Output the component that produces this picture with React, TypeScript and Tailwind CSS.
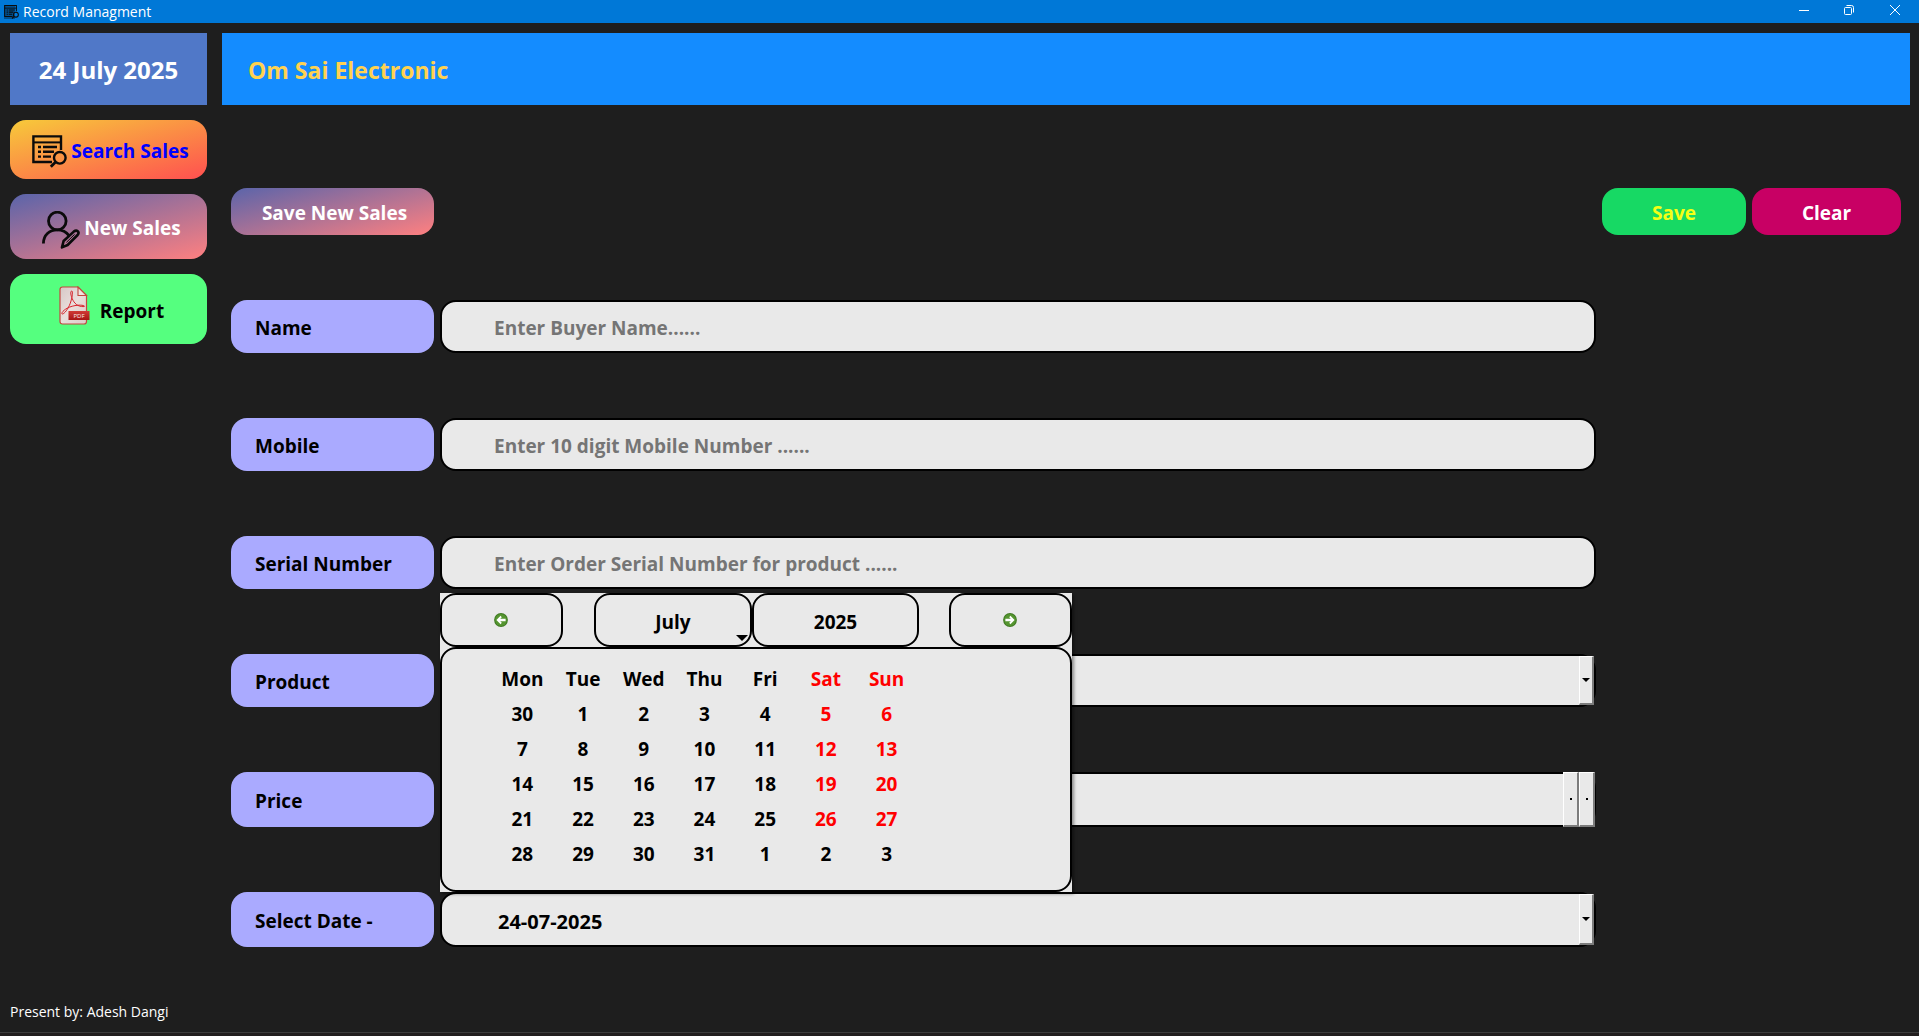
import React, { useState } from "react";

const SANS = "font-['Open_Sans','Noto_Sans',sans-serif]";

function SalesListIcon({ className }: { className: string }) {
  return (
    <svg viewBox="0 0 35 33" className={className} fill="none" stroke="#0b0b0b" aria-hidden="true">
      <path d="M20 27H1.4V1.4H29V15" strokeWidth="2.4" />
      <path d="M1 7.4H29" strokeWidth="2" />
      <path d="M6 12h3M11 12h14M6 16.8h3M11 16.8h11M6 21.6h3M11 21.6h8" strokeWidth="2.4" />
      <circle cx="27.8" cy="22.8" r="5.8" strokeWidth="2.4" />
      <path d="M23.6 27L18.8 31.8" strokeWidth="2.8" />
    </svg>
  );
}

function PersonEditIcon() {
  return (
    <svg viewBox="0 0 38 38" className="h-[38px] w-[38px]" fill="none" stroke="#0b0b0b" strokeWidth="2.8" aria-hidden="true">
      <circle cx="15.3" cy="10" r="8.8" />
      <path d="M1.4 32.5C1.4 24 7.5 18.8 15.3 18.8C20 18.8 24.5 21.2 27 24.6" />
      <path d="M20 36.4L21.6 30L31.8 20.6C34.8 18.2 38 21 35.6 24L25.6 34Z" strokeWidth="2.6" strokeLinejoin="round" />
      <path d="M24.4 31.4L32.6 23.4" strokeWidth="1" />
    </svg>
  );
}

function PdfIcon() {
  return (
    <svg viewBox="0 0 31 39" className="h-[39px] w-[31px]" aria-hidden="true">
      <defs>
        <linearGradient id="page" x1="0" y1="0" x2="1" y2="1">
          <stop offset="0" stopColor="#d6c8c6" />
          <stop offset="0.5" stopColor="#eadfdc" />
          <stop offset="1" stopColor="#dccac7" />
        </linearGradient>
        <linearGradient id="ribbon" x1="0" y1="0" x2="0" y2="1">
          <stop offset="0" stopColor="#d03a36" />
          <stop offset="1" stopColor="#a81414" />
        </linearGradient>
      </defs>
      <path d="M3.5 1H19L27.5 9.5V35.5Q27.5 38 25 38H3.5Q1 38 1 35.5V3.5Q1 1 3.5 1Z" fill="url(#page)" stroke="#c4473f" strokeWidth="1.2" />
      <path d="M19 1V9.5H27.5Z" fill="#efe4e0" stroke="#c4473f" strokeWidth="1.1" />
      <path d="M12.6 5C11 5.4 12 10 13.2 12.6C15 17 18.5 21 25 20.6C27 20 23 18.4 16 19.6C8 21 3.4 25 2.8 27.4C3 29.6 7.4 26 10.4 19.4C12.8 14 14.6 5 12.6 5Z" fill="none" stroke="#d8242c" strokeWidth="1" />
      <path d="M9.5 25H30.5V34H9.5Z" fill="url(#ribbon)" />
      <text x="20" y="32" textAnchor="middle" fontSize="6" fontFamily="Open Sans" fontWeight="400" fill="#fbe9e7">PDF</text>
    </svg>
  );
}

function ArrowBadge({ left }: { left?: boolean }) {
  return (
    <svg viewBox="0 0 14 14" className={left ? "h-3.5 w-3.5" : "h-3.5 w-3.5 rotate-180"} aria-hidden="true">
      <circle cx="7" cy="7" r="6.9" fill="#3f7a22" />
      <circle cx="7" cy="7" r="5.9" fill="#559530" />
      <path d="M2.4 7L6.6 2.8L7.8 4.2L6.2 5.8H11.6V8.2H6.2L7.8 9.8L6.6 11.2Z" fill="#fff" />
    </svg>
  );
}

const FIELD =
  "w-full min-w-0 appearance-none rounded-[16px] border-2 border-black bg-[#e9e9e9] pl-[52px] pt-1 font-bold text-black outline-none placeholder:text-[#757575] placeholder:opacity-100";

const BEVEL =
  "flex items-center justify-center border-t border-l-1 border-r-2 border-b-2 border-t-white border-l-white border-r-[#7c7c7c] border-b-[#7c7c7c] bg-[#e9e9e9]";

function DownArrow() {
  return (
    <svg viewBox="0 0 8 4" className="h-1 w-2" aria-hidden="true">
      <path d="M0 0H8L4 4Z" fill="#000" />
    </svg>
  );
}

function FormRow({ id, label, tall, children }: { id: string; label: string; tall?: boolean; children: React.ReactNode }) {
  return (
    <div className={(tall ? "h-[55px]" : "h-[53px]") + " grid grid-cols-[203px_minmax(0,1fr)_299px] gap-1.5"}>
      <label htmlFor={id} className="flex items-center rounded-[16px] bg-[#aaaaff] pl-6 pt-1 text-[19px] font-bold text-black">
        {label}
      </label>
      <div className="relative flex">{children}</div>
    </div>
  );
}

const DAYS = ["Mon", "Tue", "Wed", "Thu", "Fri", "Sat", "Sun"];
const WEEKS = [
  [30, 1, 2, 3, 4, 5, 6],
  [7, 8, 9, 10, 11, 12, 13],
  [14, 15, 16, 17, 18, 19, 20],
  [21, 22, 23, 24, 25, 26, 27],
  [28, 29, 30, 31, 1, 2, 3],
];

const NAV = "flex h-[54px] items-center justify-center rounded-[16px] border-2 border-black bg-[#e9e9e9]";

function CalendarPopup({ onPick }: { onPick: (value: string) => void }) {
  return (
    <div className="absolute bottom-full left-0 z-10 w-[632px] bg-[#e9e9e9] text-[19px] font-bold text-black shadow-[2px_2px_3px_rgba(0,0,0,0.4)]">
      <div className="flex">
        <button type="button" aria-label="Previous month" className={NAV + " w-[123px] pr-0.5"}>
          <ArrowBadge left />
        </button>
        <button type="button" className={NAV + " relative ml-[31px] w-[158px] pt-1"}>
          July
          <svg viewBox="0 0 12 6" className="absolute right-0.5 bottom-1 h-1.5 w-3" aria-hidden="true">
            <path d="M0 0H12L6 6Z" fill="#000" />
          </svg>
        </button>
        <button type="button" className={NAV + " w-[167px] pt-1"}>2025</button>
        <button type="button" aria-label="Next month" className={NAV + " ml-auto w-[123px] pr-0.5"}>
          <ArrowBadge />
        </button>
      </div>
      <div className="h-[245px] rounded-[16px] border-2 border-black pt-[13px] pl-[50px]">
        <table className="w-[425px] table-fixed border-collapse text-center leading-[35px]">
          <thead>
            <tr>
              {DAYS.map((day, i) => (
                <th key={day} scope="col" className={i > 4 ? "h-[35px] p-0 text-[#ff0000]" : "h-[35px] p-0"}>
                  {day}
                </th>
              ))}
            </tr>
          </thead>
          <tbody>
            {WEEKS.map((week, w) => (
              <tr key={w}>
                {week.map((day, i) => (
                  <td key={i} className={i > 4 && w < 4 ? "h-[35px] p-0 text-[#ff0000]" : "h-[35px] p-0"}>
                    <button type="button" className="block w-full" onClick={() => onPick(String(day).padStart(2, "0") + "-07-2025")}>
                      {day}
                    </button>
                  </td>
                ))}
              </tr>
            ))}
          </tbody>
        </table>
      </div>
    </div>
  );
}

export default function App() {
  const [date, setDate] = useState("24-07-2025");
  return (
    <div className={SANS + " flex min-h-screen flex-col bg-[#1e1e1e]"}>
      <header className="flex h-[23px] shrink-0 items-center bg-[#0078d7] pl-1 text-white">
        <span className="relative flex">
          <span className="absolute inset-0 right-1 bg-[#00508f]" />
          <SalesListIcon className="relative h-3.5 w-[15px]" />
        </span>
        <h1 className="pl-1 text-[14px] leading-[22px]">Record Managment</h1>
        <div className="ml-auto flex self-start">
          <button type="button" aria-label="Minimize" className="flex h-5 w-[46px] items-center justify-center">
            <svg viewBox="0 0 10 10" className="h-2.5 w-2.5" stroke="#fff"><path d="M0 5.5H10" /></svg>
          </button>
          <button type="button" aria-label="Restore" className="flex h-5 w-11 items-center justify-center">
            <svg viewBox="0 0 10 10" className="h-2.5 w-2.5" fill="none" stroke="#fff">
              <rect x="0.5" y="2.5" width="7" height="7" rx="1" />
              <path d="M2.5 0.5H7.5Q9.5 0.5 9.5 2.5V7.5" />
            </svg>
          </button>
          <button type="button" aria-label="Close" className="flex h-5 w-12 items-center justify-center">
            <svg viewBox="0 0 10 10" className="h-2.5 w-2.5" stroke="#fff"><path d="M0 0L10 10M10 0L0 10" /></svg>
          </button>
        </div>
      </header>

      <div className="flex flex-1 gap-[15px] pt-2.5 pr-[9px] pl-2.5">
        <aside className="flex w-[197px] shrink-0 flex-col gap-[15px]">
          <div className="flex h-[72px] items-center justify-center bg-[#5078c8] pt-0.5 text-[24px] font-bold text-white">24 July 2025</div>
          <button type="button" className="flex h-[59px] items-center justify-center gap-1 rounded-[16px] bg-linear-[165deg] from-[#f7ca3a] to-[#ff5050] pl-1 text-[19px] font-bold text-[#0000ff]">
            <SalesListIcon className="mt-1 h-[33px] w-[35px]" />
            <span className="pt-1">Search Sales</span>
          </button>
          <button type="button" className="flex h-[65px] items-center justify-center gap-1 rounded-[16px] bg-linear-[165deg] from-[#5a64aa] to-[#ff8080] pl-1.5 text-[19px] font-bold text-white">
            <span className="pt-1.5"><PersonEditIcon /></span>
            <span className="pt-1">New Sales</span>
          </button>
          <button type="button" className="flex h-[70px] items-center justify-center gap-2.5 rounded-[16px] bg-[#55ff7f] pl-1.5 text-[19px] font-bold text-black">
            <span className="pb-2"><PdfIcon /></span>
            <span className="pt-1">Report</span>
          </button>
        </aside>

        <main className="min-w-0 flex-1">
          <h2 className="flex h-[72px] items-center bg-[#148cff] pt-0.5 pl-[26px] text-[23px] font-bold text-[#ffd250]">Om Sai Electronic</h2>
          <form className="flex flex-col gap-[65px] px-[9px] pt-[83px]" onSubmit={(e) => e.preventDefault()}>
            <div className="flex h-[47px] gap-1.5 text-[19px] font-bold">
              <h3 className="flex w-[203px] items-center justify-center rounded-[16px] bg-linear-[165deg] from-[#5a64aa] to-[#ff8080] pt-1 pl-1 text-white">Save New Sales</h3>
              <button type="submit" className="ml-auto w-36 rounded-[16px] bg-[#17d964] pt-1 text-[#f5ff14]">Save</button>
              <button type="reset" className="w-[149px] rounded-[16px] bg-[#c80064] pt-1 text-white">Clear</button>
            </div>
            <FormRow id="name" label="Name">
              <input id="name" className={FIELD + " text-[19px]"} placeholder="Enter Buyer Name......" />
            </FormRow>
            <FormRow id="mobile" label="Mobile">
              <input id="mobile" type="tel" className={FIELD + " text-[19px]"} placeholder="Enter 10 digit Mobile Number ......" />
            </FormRow>
            <FormRow id="serial" label="Serial Number">
              <input id="serial" className={FIELD + " text-[19px]"} placeholder="Enter Order Serial Number for product ......" />
            </FormRow>
            <FormRow id="product" label="Product">
              <select id="product" className={FIELD + " text-[19px]"} defaultValue="">
                <option value="" />
              </select>
              <span className={BEVEL + " pointer-events-none absolute top-0.5 right-0.5 bottom-0.5 w-[15px]"}>
                <DownArrow />
              </span>
            </FormRow>
            <FormRow id="price" label="Price" tall>
              <input id="price" inputMode="decimal" className={FIELD + " text-[19px]"} />
              <div className="absolute inset-y-0 right-px flex">
                <button type="button" aria-label="Decrease price" className={BEVEL + " w-4"}>
                  <span className="h-0.5 w-0.5 bg-black" />
                </button>
                <button type="button" aria-label="Increase price" className={BEVEL + " w-4"}>
                  <span className="h-0.5 w-0.5 bg-black" />
                </button>
              </div>
            </FormRow>
            <FormRow id="date" label="Select Date -" tall>
              <input id="date" className={FIELD + " indent-1 text-[20px]"} value={date} onChange={(e) => setDate(e.target.value)} />
              <span className={BEVEL + " pointer-events-none absolute top-0.5 right-0.5 bottom-0.5 w-[15px]"}>
                <DownArrow />
              </span>
              <CalendarPopup onPick={setDate} />
            </FormRow>
          </form>
        </main>
      </div>

      <footer className="mt-auto">
        <p className="px-2.5 pb-2 text-[14px] leading-6 text-white">Present by: Adesh Dangi</p>
        <div className="h-1 border-t border-[#3c3c3c] bg-[#221e1e]" />
      </footer>
    </div>
  );
}
